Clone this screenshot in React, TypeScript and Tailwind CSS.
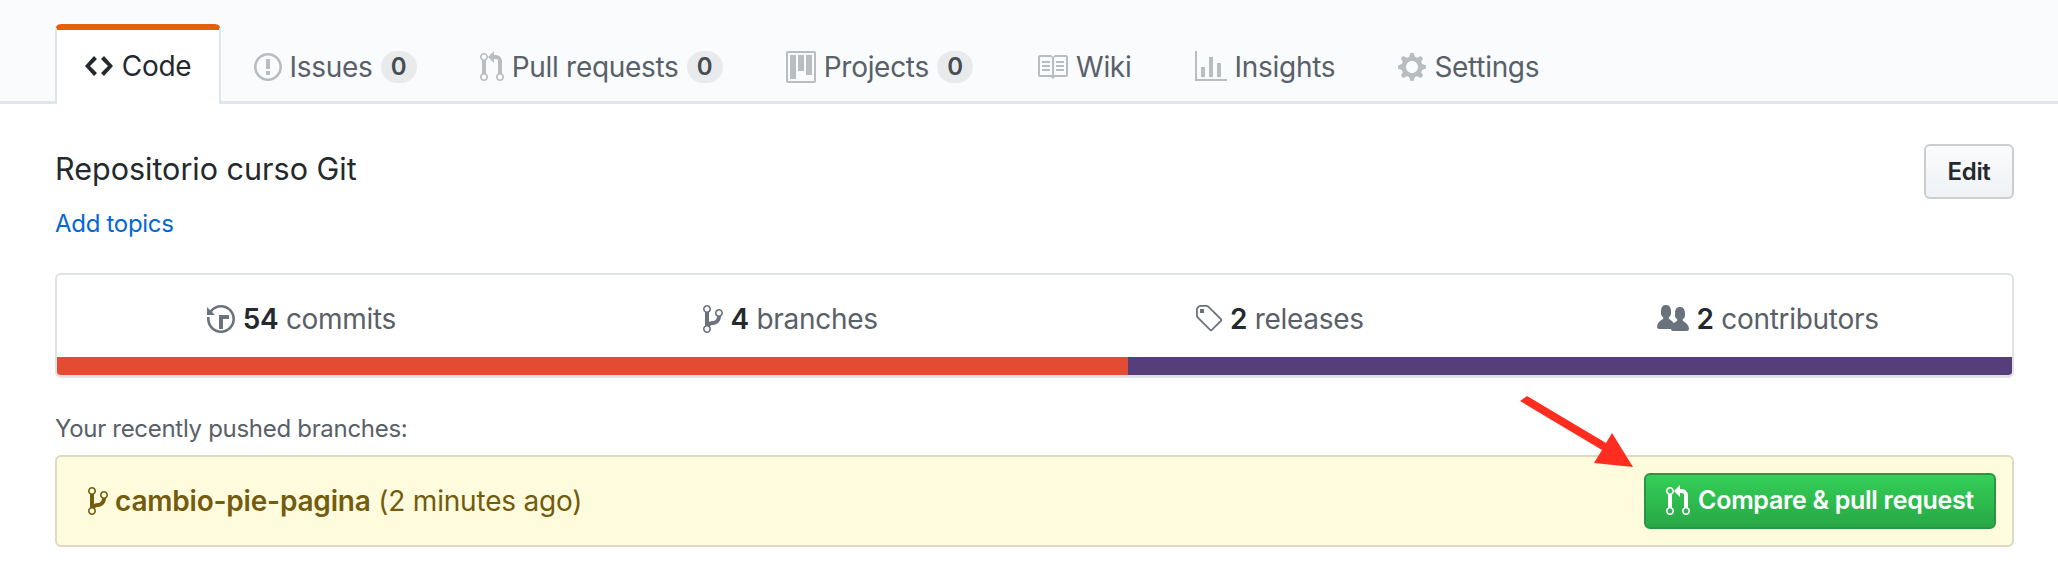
import React from 'react';

const paths = {
  code: { w: 14, d: 'M9.5 3L8 4.5 11.5 8 8 11.5 9.5 13 14 8 9.5 3zm-5 0L0 8l4.5 5L6 11.5 2.5 8 6 4.5 4.5 3z' },
  issue: { w: 14, d: 'M7 2.3c3.14 0 5.7 2.56 5.7 5.7s-2.56 5.7-5.7 5.7A5.71 5.71 0 0 1 1.3 8c0-3.14 2.56-5.7 5.7-5.7zM7 1C3.14 1 0 4.14 0 8s3.14 7 7 7 7-3.14 7-7-3.14-7-7-7zm1 3H6v5h2V4zm0 6H6v2h2v-2z' },
  pull: { w: 12, d: 'M11 11.28V5c-.03-.78-.34-1.47-.94-2.06C9.46 2.35 8.78 2.03 8 2H7V0L4 3l3 3V4h1c.27.02.48.11.69.31.21.2.3.42.31.69v6.28A1.993 1.993 0 0 0 10 15a1.993 1.993 0 0 0 1-3.72zm-1 2.92c-.66 0-1.2-.55-1.2-1.2 0-.65.55-1.2 1.2-1.2.65 0 1.2.55 1.2 1.2 0 .65-.55 1.2-1.2 1.2zM4 3c0-1.11-.89-2-2-2a1.993 1.993 0 0 0-1 3.72v6.56A1.993 1.993 0 0 0 2 15a1.993 1.993 0 0 0 1-3.72V4.72c.59-.34 1-.98 1-1.72zm-.8 10c0 .66-.55 1.2-1.2 1.2-.65 0-1.2-.55-1.2-1.2 0-.65.55-1.2 1.2-1.2.65 0 1.2.55 1.2 1.2zM2 4.2C1.34 4.2.8 3.65.8 3c0-.65.55-1.2 1.2-1.2.65 0 1.2.55 1.2 1.2 0 .65-.55 1.2-1.2 1.2z' },
  project: { w: 15, d: 'M10 12h3V2h-3v10zm-4-2h3V2H6v8zm-4 4h3V2H2v12zm-1 1h13V1H1v14zM14 0H1a1 1 0 0 0-1 1v14a1 1 0 0 0 1 1h13a1 1 0 0 0 1-1V1a1 1 0 0 0-1-1z' },
  book: { w: 16, d: 'M3 5h4v1H3V5zm0 3h4V7H3v1zm0 2h4V9H3v1zm11-5h-4v1h4V5zm0 2h-4v1h4V7zm0 2h-4v1h4V9zm2-6v9c0 .55-.45 1-1 1H9.5l-1 1-1-1H2c-.55 0-1-.45-1-1V3c0-.55.45-1 1-1h5.5l1 1 1-1H15c.55 0 1 .45 1 1zm-8 .5L7.5 3H2v9h6V3.5zm7-.5H9.5l-.5.5V12h6V3z' },
  graph: { w: 16, d: 'M16 14v1H0V0h1v14h15zM5 13H3V8h2v5zm4 0H7V3h2v10zm4 0h-2V6h2v7z' },
  gear: { w: 14, d: 'M14 8.77v-1.6l-1.94-.64-.45-1.09.88-1.84-1.13-1.13-1.81.91-1.09-.45-.69-1.92h-1.6l-.63 1.94-1.11.45-1.84-.88-1.13 1.13.91 1.81-.45 1.09L0 7.23v1.59l1.94.64.45 1.09-.88 1.84 1.13 1.13 1.81-.91 1.09.45.69 1.92h1.59l.63-1.94 1.11-.45 1.84.88 1.13-1.13-.92-1.81.47-1.09L14 8.75v.02zM7 11c-1.66 0-3-1.34-3-3s1.34-3 3-3 3 1.34 3 3-1.34 3-3 3z' },
  history: { w: 14, d: 'M8 13H6V6h5v2H8v5zM7 1C4.81 1 2.87 2.02 1.59 3.59L0 2v4h4L2.5 4.5C3.55 3.17 5.17 2.3 7 2.3c3.14 0 5.7 2.56 5.7 5.7s-2.56 5.7-5.7 5.7A5.71 5.71 0 0 1 1.3 8c0-.34.03-.67.09-1H.08C.03 7.33 0 7.66 0 8c0 3.86 3.14 7 7 7s7-3.14 7-7-3.14-7-7-7z' },
  branch: { w: 10, d: 'M10 5c0-1.11-.89-2-2-2a1.993 1.993 0 0 0-1 3.72v.3c-.02.52-.23.98-.63 1.38-.4.4-.86.61-1.38.63-.83.02-1.48.16-2 .45V4.72a1.993 1.993 0 0 0-1-3.72C.88 1 0 1.89 0 3a2 2 0 0 0 1 1.72v6.56c-.59.35-1 .99-1 1.72 0 1.11.89 2 2 2 1.11 0 2-.89 2-2 0-.53-.2-1-.53-1.36.09-.06.48-.41.59-.47.25-.11.56-.17.94-.17 1.05-.05 1.95-.45 2.75-1.25S8.95 7.77 9 6.73h-.02C9.59 6.37 10 5.73 10 5zM2 1.8c.66 0 1.2.55 1.2 1.2 0 .65-.55 1.2-1.2 1.2C1.35 4.2.8 3.65.8 3c0-.65.55-1.2 1.2-1.2zm0 12.41c-.66 0-1.2-.55-1.2-1.2 0-.65.55-1.2 1.2-1.2.65 0 1.2.55 1.2 1.2 0 .65-.55 1.2-1.2 1.2zm6-8c-.66 0-1.2-.55-1.2-1.2 0-.65.55-1.2 1.2-1.2.65 0 1.2.55 1.2 1.2 0 .65-.55 1.2-1.2 1.2z' },
  tag: { w: 14, d: 'M7.73 1.73C7.26 1.26 6.62 1 5.96 1H3.5C2.13 1 1 2.13 1 3.5v2.47c0 .66.27 1.3.73 1.77l6.06 6.06c.39.39 1.02.39 1.41 0l4.59-4.59a.996.996 0 0 0 0-1.41L7.73 1.73zM2.38 7.09c-.31-.3-.47-.7-.47-1.13V3.5c0-.88.72-1.59 1.59-1.59h2.47c.42 0 .83.16 1.13.47l6.14 6.13-4.73 4.73-6.13-6.15zM3.01 3h2v2H3V3h.01z' },
  people: { w: 16, d: 'M16 12.999c0 .439-.45 1-1 1H7.995c-.539 0-.994-.447-.995-.999H1c-.54 0-1-.561-1-1 0-2.634 3-4 3-4s.229-.409 0-1c-.841-.621-1.058-.59-1-3 .058-2.419 1.367-3 2.5-3s2.442.58 2.5 3c.058 2.41-.159 2.379-1 3-.229.59 0 1 0 1s1.549.711 2.42 2.088C9.196 9.369 10 8.999 10 8.999s.229-.409 0-1c-.841-.62-1.058-.59-1-3 .058-2.419 1.367-3 2.5-3s2.437.581 2.495 3c.059 2.41-.158 2.38-1 3-.229.59 0 1 0 1s3.005 1.366 3.005 4z' },
};

type IconName = keyof typeof paths;

const Icon = ({ name, className }: { name: IconName; className: string }) => (
  <svg viewBox={`0 0 ${paths[name].w} 16`} width={paths[name].w * 2} height={32} className={`shrink-0 fill-current ${className}`}>
    <path fillRule="evenodd" d={paths[name].d} />
  </svg>
);

const tabs: { label: string; icon: IconName; count?: number }[] = [
  { label: 'Issues', icon: 'issue', count: 0 },
  { label: 'Pull requests', icon: 'pull', count: 0 },
  { label: 'Projects', icon: 'project', count: 0 },
  { label: 'Wiki', icon: 'book' },
  { label: 'Insights', icon: 'graph' },
  { label: 'Settings', icon: 'gear' },
];

const stats: { n: number; label: string; icon: IconName }[] = [
  { n: 54, label: 'commits', icon: 'history' },
  { n: 4, label: 'branches', icon: 'branch' },
  { n: 2, label: 'releases', icon: 'tag' },
  { n: 2, label: 'contributors', icon: 'people' },
];

export default function App() {
  return (
    <div className="relative h-[566px] overflow-hidden bg-white font-['Inter',sans-serif] text-[28px] tracking-[-0.3px] text-[#24292e]">
      {/* Repo nav */}
      <div className="flex h-[104px] items-end border-b-[3px] border-[#e1e4e8] bg-[#fafbfc] pl-[55px]">
        <div className="-mb-[3px] flex h-[80px] w-[166px] items-center justify-center gap-[9px] rounded-t-[6px] border-x-2 border-t-[6px] border-x-[#e1e4e8] border-t-[#e36209] bg-white pb-[2px]">
          <Icon name="code" className="text-[#24292e]" />
          <span>Code</span>
        </div>
        <div className="ml-[1px] flex h-[80px] items-center pt-[11px]">
          {tabs.map((t) => (
            <div key={t.label} className="flex items-center gap-[8px] px-[31.6px] text-[#586069]">
              <Icon name={t.icon} className="text-[#babdc0]" />
              <span>{t.label}</span>
              {t.count !== undefined && (
                <span className="flex h-[32px] w-[36px] items-center justify-center rounded-full bg-[#e9eaeb] text-[24px] font-semibold text-[#444d56]">
                  {t.count}
                </span>
              )}
            </div>
          ))}
        </div>
      </div>

      <div className="pl-[55px] pr-[44px]">
        {/* Description */}
        <div className="flex items-start justify-between pt-[40px]">
          <div className="pt-[5px] text-[30.5px] leading-[40px] tracking-normal">Repositorio curso Git</div>
          <button className="h-[55px] w-[90px] rounded-[6px] border-2 border-[#cbcdcf] bg-gradient-to-b from-[#fafbfc] to-[#eff3f6] text-[24px] font-semibold">
            Edit
          </button>
        </div>
        <a className="mt-[9px] block text-[24px] leading-[32px] text-[#0366d6]">Add topics</a>

        {/* Numbers summary */}
        <div className="mt-[33px] overflow-hidden rounded-[6px] border-2 border-b-[3px] border-[#dfe2e5]">
          <div className="grid h-[82px] grid-cols-4 pt-[5px]">
            {stats.map((s) => (
              <div key={s.label} className="flex items-center justify-center gap-[8px] text-[#586069]">
                <Icon name={s.icon} className="text-[#6a737d]" />
                <span>
                  <b className="font-semibold text-[#24292e]">{s.n}</b> {s.label}
                </span>
              </div>
            ))}
          </div>
          <div className="flex h-[18px]">
            <div className="w-[1071px] bg-[#e34c32]" />
            <div className="flex-1 bg-[#563d7c]" />
          </div>
        </div>

        {/* Recently pushed */}
        <div className="mt-[35px] text-[24px] leading-[32px] text-[#586069]">Your recently pushed branches:</div>
        <div className="mt-[10px] flex h-[92px] items-center justify-between rounded-[6px] border-2 border-[#dfd8c2] bg-[#fffbdd] pl-[31px] pr-[16px]">
          <div className="flex items-center gap-[7px] tracking-[-0.2px] text-[#735c0f]">
            <Icon name="branch" className="" />
            <span>
              <b className="font-semibold">cambio-pie-pagina</b> (2 minutes ago)
            </span>
          </div>
          <button className="flex h-[56px] w-[352px] items-center justify-center gap-[8px] rounded-[6px] border-2 border-[#2a9643] bg-gradient-to-b from-[#34d058] to-[#28a745] text-[25px] font-semibold text-white">
            <Icon name="pull" className="" />
            Compare &amp; pull request
          </button>
        </div>
      </div>

      {/* Annotation arrow */}
      <svg className="pointer-events-none absolute left-[1510px] top-[390px]" width="130" height="85" viewBox="1510 390 130 85">
        <polygon points="1527,396 1520,401 1602,450 1594,463 1633,467 1612,433 1606,443" fill="#ff2d20" />
      </svg>
    </div>
  );
}
